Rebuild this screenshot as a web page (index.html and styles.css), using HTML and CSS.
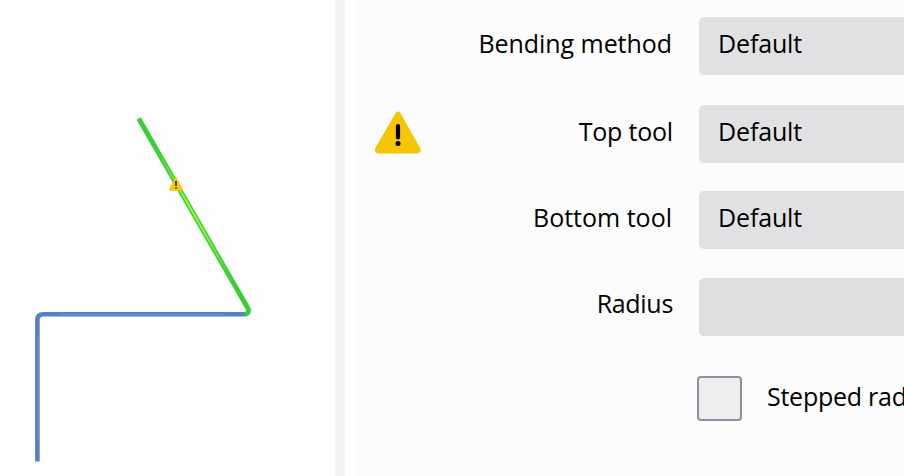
FILE: index.html
```html
<!DOCTYPE html>
<html lang="en">
<head>
<meta charset="utf-8">
<title>Bend properties</title>
<link rel="stylesheet" href="styles.css">
</head>
<body>
<main class="app">
  <section class="view">
    <svg class="profile" width="335" height="476" viewBox="0 0 335 476" fill="none">
      <defs>
        <linearGradient id="shine" gradientUnits="userSpaceOnUse" x1="154" y1="145" x2="234" y2="284">
          <stop offset="0" stop-color="#a0f53c" stop-opacity="0"/>
          <stop offset=".4" stop-color="#a0f53c"/>
          <stop offset=".6" stop-color="#a0f53c"/>
          <stop offset="1" stop-color="#a0f53c" stop-opacity="0"/>
        </linearGradient>
      </defs>
      <path d="M37.4 461.500V320Q37.400 314.200 43.200 314.200H246" stroke="#5580c6" stroke-width="4.600"/>
      <path d="M38 440V335M60 314.600H225" stroke="#7196ca" stroke-width="1.200" stroke-opacity=".8"/>
      <path d="M138.700 118.500L247.500 307.500Q250.500 313 245 314.200" stroke="#35d035" stroke-width="4.800"/>
      <path d="M154 145L234 284" stroke="url(#shine)" stroke-width="2"/>
      <path d="M176 178.800L181.500 189.600H170.300Z" fill="#f9c506" stroke="#f9c506" stroke-width="2.400" stroke-linejoin="round"/>
      <path d="M176 181V186M176 187.300V188.800" stroke="#1c1800" stroke-width="1.500"/>
    </svg>
  </section>
  <div class="splitter"></div>
  <section class="panel">
    <div class="row method"><span class="label">Bending method</span><div class="field">Default</div></div>
    <div class="row top">
      <svg class="warning" width="50" height="44" viewBox="0 0 50 44">
        <path d="M25 4L45 39.300Q45.500 41 44 41H5.500Q4 41 4.500 39.300Z" fill="#f6c604" stroke="#f6c604" stroke-width="5" stroke-linejoin="round"/>
        <path d="M25 16V27.500" stroke="#000" stroke-width="4.200" stroke-linecap="round"/>
        <circle cx="25" cy="33.500" r="2.500"/>
      </svg>
      <span class="label">Top tool</span><div class="field">Default</div>
    </div>
    <div class="row bottom"><span class="label">Bottom tool</span><div class="field">Default</div></div>
    <div class="row radius"><span class="label">Radius</span><div class="field empty"></div></div>
    <div class="check"><span class="box"></span><span class="caption">Stepped radius</span></div>
  </section>
</main>
</body>
</html>
```
FILE: styles.css
```css
* { box-sizing: border-box; }
body { margin: 0; background: #fff; color: #000; font: 25px/34px "Open Sans", "Noto Sans", sans-serif; }
.app { display: flex; width: 904px; height: 476px; overflow: hidden; }
.view { flex: 0 0 335px; }
.profile { display: block; }
.splitter { flex: 0 0 10px; margin-right: 13px; background: #f3f3f6; }
.panel { flex: 1; min-width: 0; padding-top: 17px; background: #fcfcfc; overflow: hidden; }
.row { display: grid; grid-template-columns: 50px 249px 1fr; padding-left: 15px; height: 58px; align-items: start; white-space: nowrap; }
.label { grid-column: 2; text-align: right; padding-top: 9px; }
.method .label { letter-spacing: -.05px; }
.top .label { letter-spacing: -.2px; margin-right: -1px; }
.field { grid-column: 3; height: 58px; margin-left: 27px; padding: 9px 19px; letter-spacing: -.15px; background: #e1e1e3; border-radius: 5px 0 0 5px; }
.empty { background: #dfdfe1; height: 58px; }
.warning { grid-column: 1; margin-top: 5px; }
.top { margin-top: 30px; }
.bottom { margin-top: 28px; }
.radius { margin-top: 29px; }
.radius .label { padding-top: 8px; letter-spacing: -.3px; margin-right: -1px; }
.check { display: flex; margin: 40px 0 0 339px; white-space: nowrap; }
.box { flex: 0 0 45px; height: 45px; border: 2px solid #8f8f9b; border-radius: 4px; background: #eeeef0; }
.caption { margin: 3px 0 0 25px; letter-spacing: -.25px; }
```
